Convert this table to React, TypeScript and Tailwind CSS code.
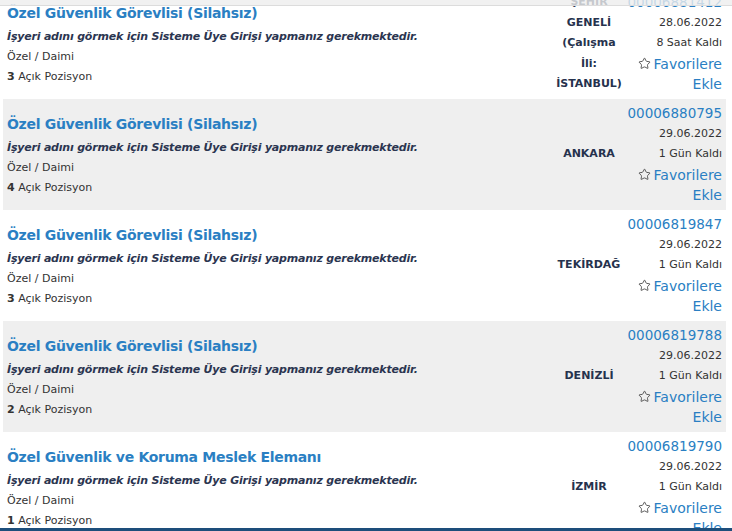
import { Star } from "lucide-react";

interface Job {
  title: string;
  id: string;
  date: string;
  left: string;
  city: string;
  count: number;
}

const jobs: Job[] = [
  { title: "Özel Güvenlik Görevlisi (Silahsız)", id: "00006881412", date: "28.06.2022", left: "8 Saat Kaldı", city: "ŞEHİR GENELİ (Çalışma İli: İSTANBUL)", count: 3 },
  { title: "Özel Güvenlik Görevlisi (Silahsız)", id: "00006880795", date: "29.06.2022", left: "1 Gün Kaldı", city: "ANKARA", count: 4 },
  { title: "Özel Güvenlik Görevlisi (Silahsız)", id: "00006819847", date: "29.06.2022", left: "1 Gün Kaldı", city: "TEKİRDAĞ", count: 3 },
  { title: "Özel Güvenlik Görevlisi (Silahsız)", id: "00006819788", date: "29.06.2022", left: "1 Gün Kaldı", city: "DENİZLİ", count: 2 },
  { title: "Özel Güvenlik ve Koruma Meslek Elemanı", id: "00006819790", date: "29.06.2022", left: "1 Gün Kaldı", city: "İZMİR", count: 1 },
];

const JobRow = ({ job, odd }: { job: Job; odd: boolean }) => (
  <div className={`flex items-center h-[111px] pl-[4px] pr-[4px] ${odd ? "bg-[#efefef]" : "bg-white"}`}>
    <div className="flex-1">
      <a className="block mb-[2px] text-[14px] leading-[24px] font-bold tracking-[-0.3px] text-[#2a7fc3]">{job.title}</a>
      <p className="text-[11px] leading-[20px] font-bold italic tracking-[-0.2px] text-[#2b3550]">
        İşyeri adını görmek için Sisteme Üye Girişi yapmanız gerekmektedir.
      </p>
      <p className="text-[11px] leading-[20px] text-[#333]">Özel / Daimi</p>
      <p className="text-[11px] leading-[20px] text-[#333]">
        <b>{job.count}</b> Açık Pozisyon
      </p>
    </div>
    <div className="w-[70px] mr-[2px] text-center text-[11px] leading-[20.5px] font-bold text-[#26324d]">{job.city}</div>
    <div className="w-[96px] text-right">
      <a className="block text-[13.5px] leading-[20.5px] text-[#2a7fc3]">{job.id}</a>
      <p className="text-[11px] leading-[20.5px] text-[#333]">{job.date}</p>
      <p className="text-[11px] leading-[20.5px] text-[#333]">{job.left}</p>
      <a className="block text-[14px] leading-[20.5px] text-[#2a7fc3]">
        <Star size={13} strokeWidth={1.6} className="inline-block mr-[3px] -mt-[3px] text-[#444]" />
        Favorilere Ekle
      </a>
    </div>
  </div>
);

export default function App() {
  return (
    <div
      className="relative h-[531px] w-[732px] overflow-hidden bg-white"
      style={{ fontFamily: '"DejaVu Sans", Verdana, sans-serif' }}
    >
      <div className="-mt-[12px] ml-[3px] w-[723px]">
        {jobs.map((job, i) => (
          <JobRow key={job.id} job={job} odd={i % 2 === 1} />
        ))}
      </div>
      <div className="absolute top-0 left-0 right-0 h-[6px] bg-[#ededed]/80 border-b border-[#dcdcdc]" />
      <div className="absolute bottom-0 left-0 right-0 h-[3px] bg-[#1d4e7b]" />
    </div>
  );
}
